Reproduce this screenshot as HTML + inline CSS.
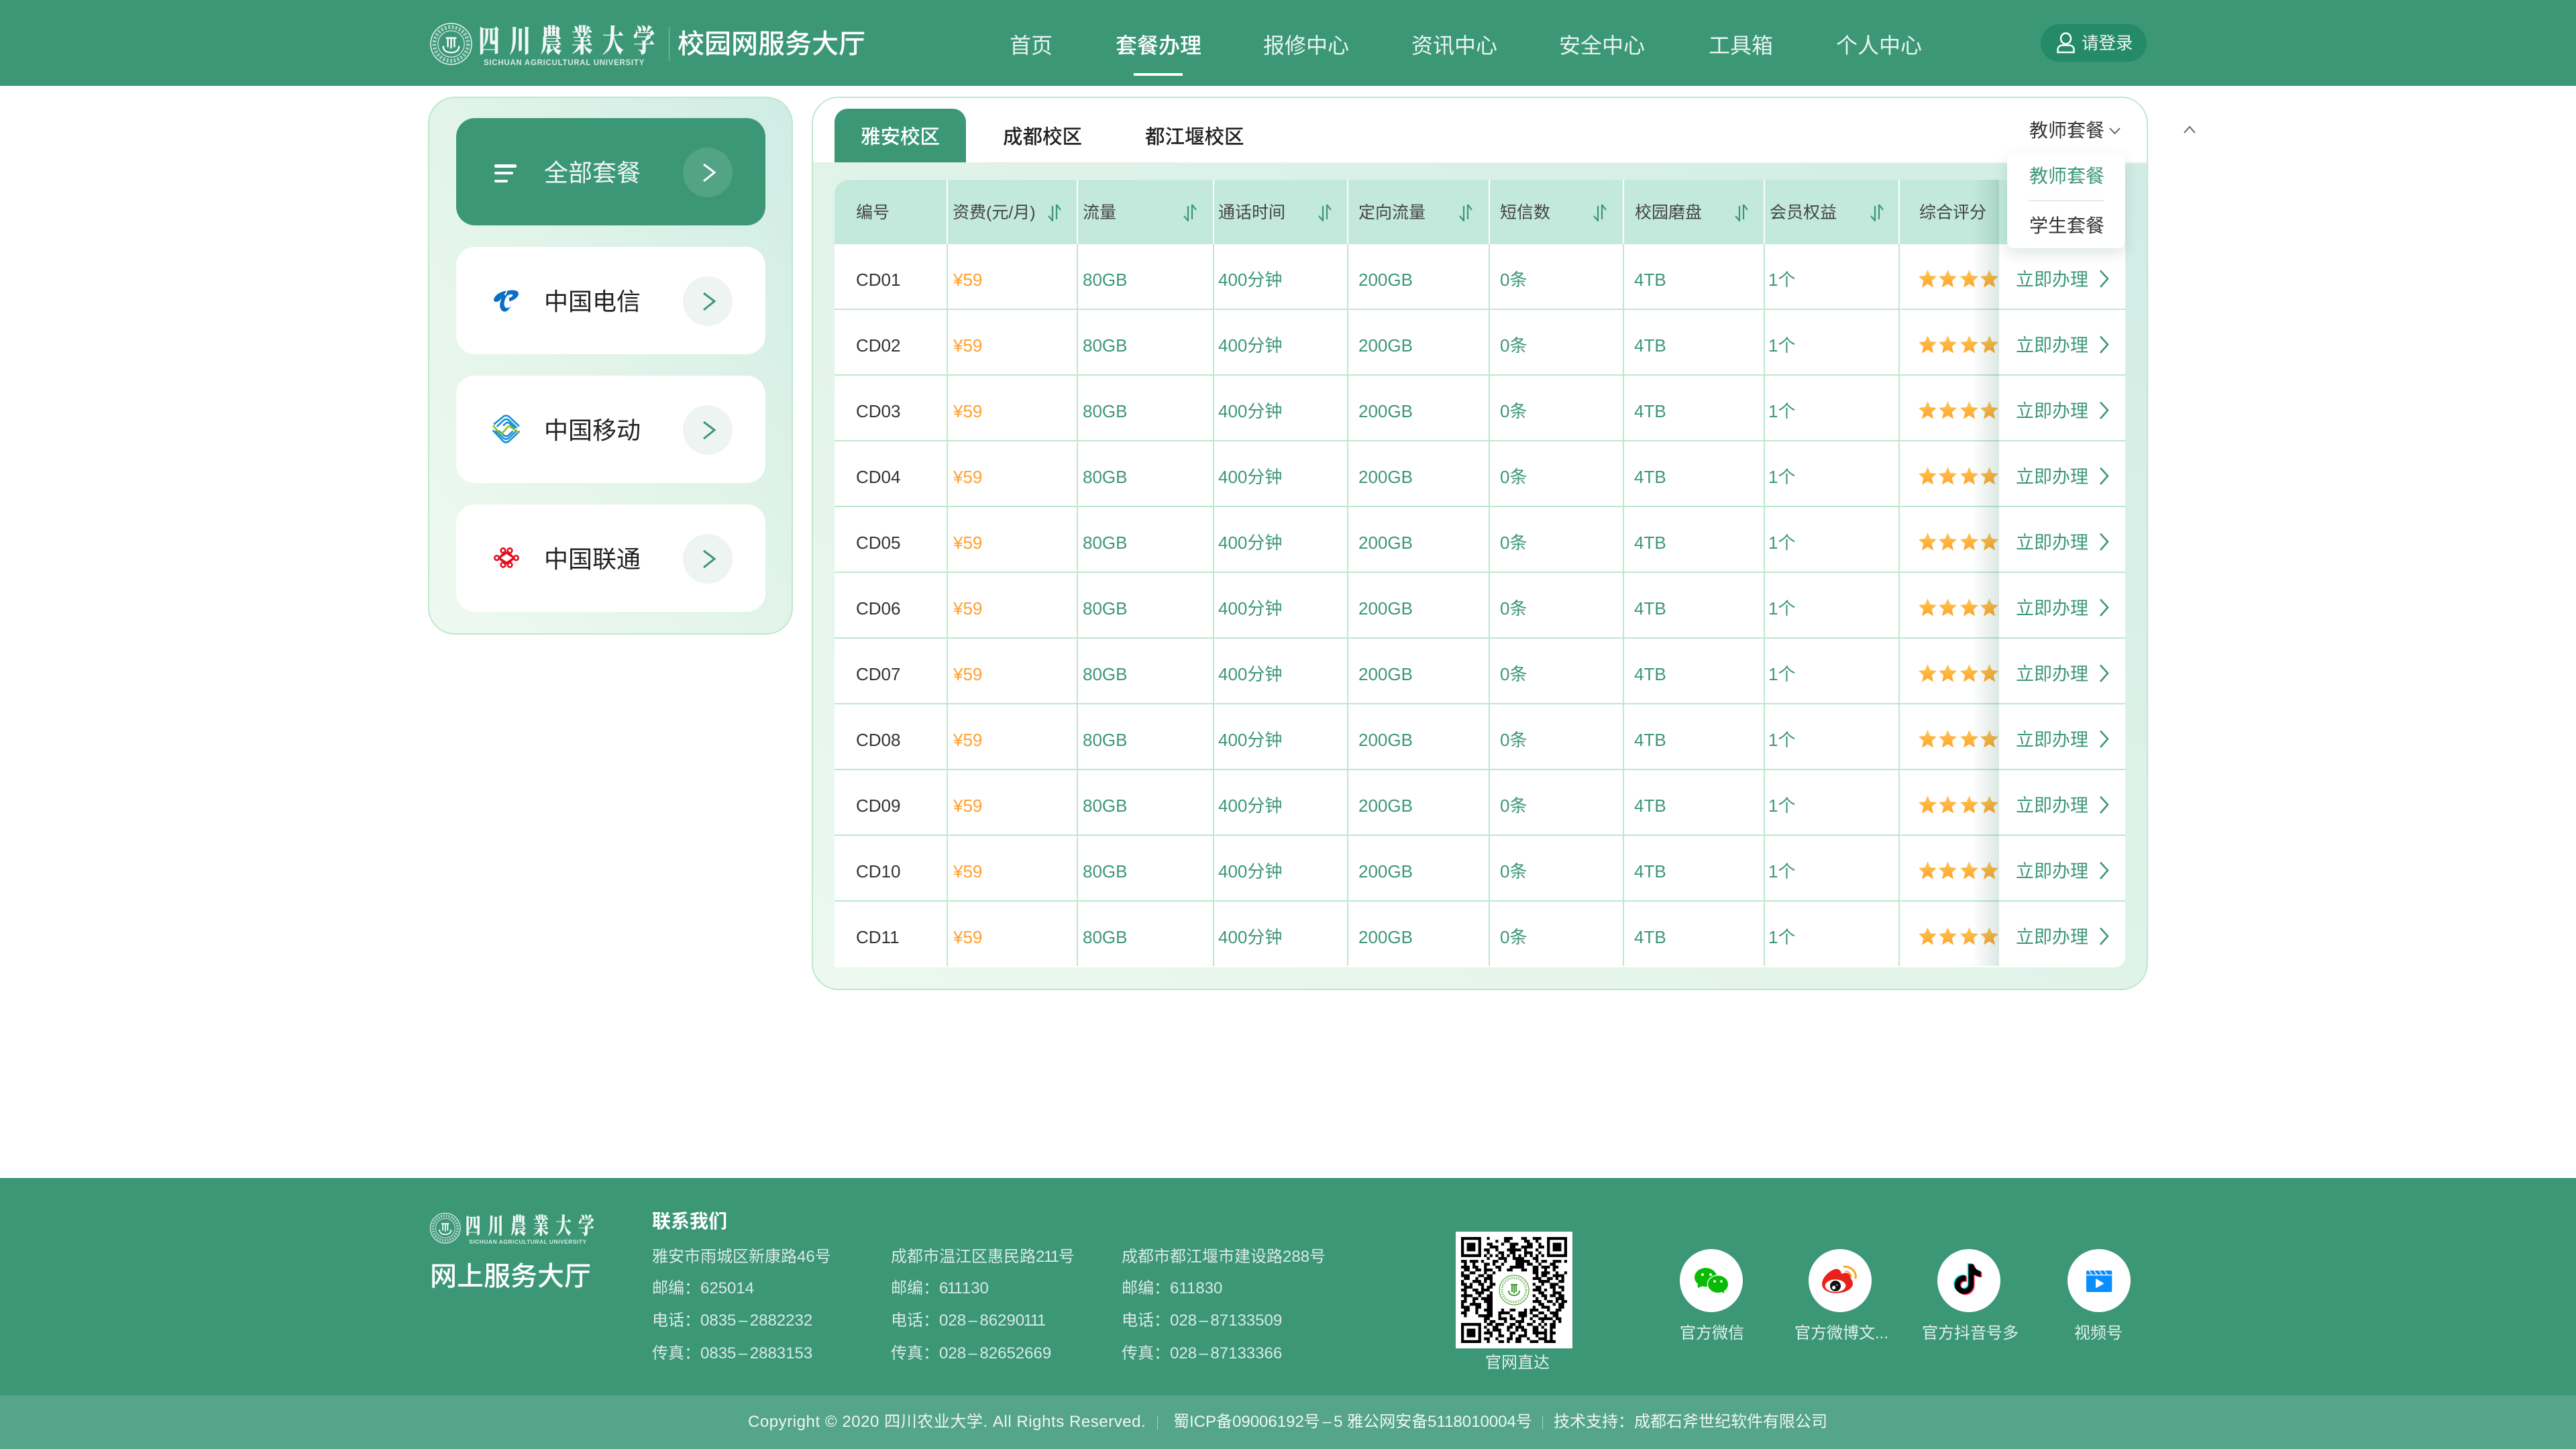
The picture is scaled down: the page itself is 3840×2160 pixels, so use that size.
<!DOCTYPE html>
<html lang="zh-CN"><head><meta charset="utf-8"><title>校园网服务大厅</title>
<style>
html,body{margin:0;padding:0;background:#fff}
body{position:relative;width:3840px;height:2160px;overflow:hidden;font-family:"Liberation Sans","Noto Sans CJK SC",sans-serif;color:#333}
.a{position:absolute}
.t{position:absolute;white-space:nowrap}
.nav{top:52px;font-size:32px;line-height:32px;color:#eaf5f1}
.card{position:absolute;left:680px;width:461px;height:160px;border-radius:28px;background:#fff}
.card b{position:absolute;left:131px;top:64px;font-size:36px;line-height:36px;font-weight:400;color:#222;white-space:nowrap}
.card i{position:absolute;left:338px;top:44px;width:74px;height:74px;border-radius:50%;background:#edf4f1}
.card svg{position:absolute;left:367px;top:67px}
.tab{top:190px;font-size:29.5px;line-height:30px;font-weight:500;color:#222}
.th{top:304px;font-size:25px;line-height:26px;color:#444}
.sort{position:absolute;top:304px}
.vl{position:absolute;top:268px;height:1172px;width:2px;background:linear-gradient(#fff 0,#fff 96px,#bde8cd 96px)}
.hl{position:absolute;left:1244px;width:1924px;height:2px;background:#bde8cd}
.r{position:absolute;left:0;width:3840px;height:98px;font-size:26px;line-height:106px;color:#3c9777}
.r span{position:absolute;top:0;white-space:nowrap}
.r .c0{left:1276px;color:#333}.r .c1{left:1421px;color:#ff9f2e}.r .c2{left:1614px}.r .c3{left:1816px}.r .c4{left:2025px}.r .c5{left:2236px}.r .c6{left:2436px}.r .c7{left:2636px}
.r svg.st{position:absolute;left:2860px;top:38px}
.r .go{left:3005px;font-size:27px}
.r svg.ch{position:absolute;left:3128px;top:38px}
.f{font-size:24px;line-height:24px;color:rgba(255,255,255,.8)}
.f em{font-style:normal;margin:0 3.500px}
.f u{text-decoration:none;letter-spacing:-1.500px}
.lab{top:1976px;font-size:24px;line-height:24px;color:rgba(255,255,255,.85)}
.circ{position:absolute;top:1862px;width:94px;height:94px;border-radius:50%;background:#fff}
.lgt{position:absolute;left:73px;top:-2px;font-family:"Noto Serif CJK SC","Liberation Serif",serif;font-weight:900;font-size:46px;line-height:54px;letter-spacing:20px;transform:scaleX(.7);transform-origin:0 0;white-space:nowrap;color:#f2f8f5}
.lge{position:absolute;left:81px;top:55px;font-size:11.5px;line-height:12px;font-weight:700;letter-spacing:.72px;white-space:nowrap;color:rgba(255,255,255,.8)}
</style></head><body>
<svg width="0" height="0" style="position:absolute"><defs>
<linearGradient id="sg" x1="0" y1="0" x2="0" y2="1"><stop offset="0" stop-color="#ffc653"/><stop offset="1" stop-color="#ffa42b"/></linearGradient>
<symbol id="stars" viewBox="0 0 120 28"><g fill="url(#sg)">
<polygon id="p1" points="13.5,0 17.3,9 27,10 19.7,16.5 22,26.5 13.5,21.3 5,26.5 7.3,16.5 0,10 9.7,9"/>
<polygon transform="translate(30)" points="13.5,0 17.3,9 27,10 19.7,16.5 22,26.5 13.5,21.3 5,26.5 7.3,16.5 0,10 9.7,9"/>
<polygon transform="translate(62)" points="13.5,0 17.3,9 27,10 19.7,16.5 22,26.5 13.5,21.3 5,26.5 7.3,16.5 0,10 9.7,9"/>
<polygon transform="translate(92)" points="13.5,0 17.3,9 27,10 19.7,16.5 22,26.5 13.5,21.3 5,26.5 7.3,16.5 0,10 9.7,9"/></g></symbol>
<symbol id="srt" viewBox="0 0 20 26"><path d="M7 3V25L1 18M13 1V23M13 1L19 9" fill="none" stroke="#3c9777" stroke-width="2.2"/></symbol>
<symbol id="em" viewBox="0 0 66 66"><g fill="none" stroke="#fff">
<circle cx="33" cy="33" r="31" stroke-width="1.6" opacity=".85"/><circle cx="33" cy="33" r="25.5" stroke-width="6" stroke-dasharray="3 2.5" opacity=".55"/><circle cx="33" cy="33" r="20" stroke-width="1.2" opacity=".85"/>
<path d="M21 36c0 7 5 10 12 10s12-3 12-10M25 24h16M28 24v14M33 24v16M38 24v14" stroke-width="2.4"/></g></symbol>
</defs></svg>

<!-- header -->
<div class="a" style="left:0;top:0;width:3840px;height:128px;background:#3c9777"></div>
<div class="a" style="left:640px;top:33px;width:336px;height:66px">
<svg class="a" style="left:0;top:0" width="65" height="65"><use href="#em"/></svg>
<div class="lgt">四川農業大学</div><div class="lge">SICHUAN AGRICULTURAL UNIVERSITY</div></div>
<div class="a" style="left:997px;top:40px;width:1px;height:51px;background:rgba(255,255,255,.4)"></div>
<div class="t" style="left:1010px;top:46px;font-size:40px;line-height:40px;font-weight:500;color:#fff">校园网服务大厅</div>
<div class="t nav" style="left:1505px">首页</div>
<div class="t nav" style="left:1663px;font-weight:500;color:#fff">套餐办理</div>
<div class="a" style="left:1690px;top:109px;width:73px;height:4px;background:#fff"></div>
<div class="t nav" style="left:1883px">报修中心</div>
<div class="t nav" style="left:2104px">资讯中心</div>
<div class="t nav" style="left:2324px">安全中心</div>
<div class="t nav" style="left:2547px">工具箱</div>
<div class="t nav" style="left:2737px">个人中心</div>
<div class="a" style="left:3042px;top:36px;width:158px;height:56px;border-radius:28px;background:#258a67"></div>
<svg class="a" style="left:3064px;top:48px" width="30" height="32" fill="none" stroke="#fff" stroke-width="2.5"><ellipse cx="15.5" cy="9.5" rx="7.5" ry="8"/><path d="M3.5 30v-4c0-4 3-6.500 7-6.500h10c4 0 7 2.500 7 6.500v4z"/></svg>
<div class="t" style="left:3103px;top:52px;font-size:25.5px;line-height:26px;color:#f0f8f5">请登录</div>

<!-- left panel -->
<div class="a" style="left:638px;top:144px;width:540px;height:798px;border:2px solid #bde8cd;border-radius:40px;background:linear-gradient(to bottom left,#cfece5 0%,#e2f4ea 50%,#eef9f1 100%)"></div>
<div class="card" style="top:176px;background:#3c9777"><b style="color:#eef7f4">全部套餐</b><i style="background:rgba(255,255,255,.12)"></i>
<svg width="24" height="30" fill="none" stroke="#fff" stroke-width="3"><path d="M2 2L18 14 2 27"/></svg></div>
<div class="a" style="left:737px;top:245px;width:33px;height:4.500px;background:#fff;border-radius:2px"></div>
<div class="a" style="left:737px;top:256px;width:28px;height:4px;background:#fff;border-radius:2px"></div>
<div class="a" style="left:737px;top:268px;width:20px;height:4px;background:#fff;border-radius:2px"></div>
<div class="card" style="top:368px"><b>中国电信</b><i></i><svg width="24" height="30" fill="none" stroke="#3c9777" stroke-width="3"><path d="M2 2L18 14 2 27"/></svg></div>
<div class="card" style="top:560px"><b>中国移动</b><i></i><svg width="24" height="30" fill="none" stroke="#3c9777" stroke-width="3"><path d="M2 2L18 14 2 27"/></svg></div>
<div class="card" style="top:752px"><b>中国联通</b><i></i><svg width="24" height="30" fill="none" stroke="#3c9777" stroke-width="3"><path d="M2 2L18 14 2 27"/></svg></div>
<svg class="a" style="left:700px;top:400px" width="200" height="480" viewBox="0 0 600 1440">
<g fill="#0a6fc4"><path d="M108 140C112 120 135 105 165 100L155 118C148 128 140 138 132 146C122 152 108 152 108 140Z"/>
<path d="M170 100C190 95 218 97 219 112C219 128 200 142 178 148L176 132C190 128 196 122 192 118C185 113 172 120 160 126L165 112Z"/>
<path d="M150 118C140 140 130 165 140 183C148 198 170 202 186 165C178 178 165 182 158 172C150 158 158 135 168 122Z"/></g>
<g fill="none" stroke="#1a8fd6" stroke-width="8"><path d="M108 698L152 662Q163 655 176 663L222 706"/><path d="M122 708L154 678Q165 670 176 680L212 714"/><path d="M150 704L163 692Q170 687 178 693L202 716"/><path d="M104 724L150 773Q163 783 176 773L224 728"/><path d="M116 726L152 760Q163 768 174 760L208 728"/><path d="M130 726L155 748Q163 754 172 748L194 728"/></g>
<path fill="none" stroke="#8cc220" stroke-width="8" d="M105 703L135 738Q140 742 147 736L170 710Q176 704 182 708L220 735"/>
<g fill="none" stroke="#e60f1e" stroke-width="8"><circle cx="122" cy="1295" r="10"/><circle cx="208" cy="1295" r="10"/><circle cx="150" cy="1262" r="10"/><circle cx="180" cy="1262" r="10"/><circle cx="150" cy="1326" r="10"/><circle cx="180" cy="1326" r="10"/><path d="M132 1295L158 1268L198 1295L172 1322ZM198 1295L172 1268L132 1295L158 1322Z"/></g>
</svg>

<!-- right panel -->
<div class="a" style="left:1210px;top:144px;width:1988px;height:1328px;border:2px solid #bde8cd;border-radius:40px;background:linear-gradient(to bottom left,#cfece5 0%,#e0f3e9 50%,#ecf8f0 100%)"></div>
<div class="a" style="left:1212px;top:146px;width:1988px;height:96px;background:#fff;border-radius:38px 38px 0 0"></div>
<div class="a" style="left:1212px;top:242px;width:1988px;height:2px;background:#e9eeec"></div>
<div class="a" style="left:1244px;top:162px;width:196px;height:80px;border-radius:20px 20px 0 0;background:#3c9777"></div>
<div class="t tab" style="left:1283px;color:#fff">雅安校区</div>
<div class="t tab" style="left:1495px">成都校区</div>
<div class="t tab" style="left:1707px">都江堰校区</div>

<!-- table -->
<div class="a" style="left:1244px;top:268px;width:1924px;height:96px;background:#c3e9dc;border-radius:22px 0 0 0"></div>
<div class="a" style="left:1244px;top:364px;width:1924px;height:1078px;background:#fff;border-radius:0 0 16px 0"></div>
<div class="hl" style="top:460px"></div><div class="hl" style="top:558px"></div><div class="hl" style="top:656px"></div><div class="hl" style="top:754px"></div><div class="hl" style="top:852px"></div><div class="hl" style="top:950px"></div><div class="hl" style="top:1048px"></div><div class="hl" style="top:1146px"></div><div class="hl" style="top:1244px"></div><div class="hl" style="top:1342px"></div>
<div class="vl" style="left:1411px"></div><div class="vl" style="left:1605px"></div><div class="vl" style="left:1808px"></div><div class="vl" style="left:2008px"></div><div class="vl" style="left:2219px"></div><div class="vl" style="left:2419px"></div><div class="vl" style="left:2629px"></div><div class="vl" style="left:2830px"></div>

<div class="t th" style="left:1276px">编号</div>
<div class="t th" style="left:1420px">资费(元/月)</div>
<div class="t th" style="left:1614px">流量</div>
<div class="t th" style="left:1816px">通话时间</div>
<div class="t th" style="left:2025px">定向流量</div>
<div class="t th" style="left:2236px">短信数</div>
<div class="t th" style="left:2437px">校园磨盘</div>
<div class="t th" style="left:2638px">会员权益</div>
<div class="t th" style="left:2861px">综合评分</div>
<svg class="sort" style="left:1562px" width="20" height="26"><use href="#srt"/></svg>
<svg class="sort" style="left:1764px" width="20" height="26"><use href="#srt"/></svg>
<svg class="sort" style="left:1965px" width="20" height="26"><use href="#srt"/></svg>
<svg class="sort" style="left:2175px" width="20" height="26"><use href="#srt"/></svg>
<svg class="sort" style="left:2375px" width="20" height="26"><use href="#srt"/></svg>
<svg class="sort" style="left:2586px" width="20" height="26"><use href="#srt"/></svg>
<svg class="sort" style="left:2788px" width="20" height="26"><use href="#srt"/></svg>

<div class="r" style="top:364px"><span class="c0">CD01</span><span class="c1">¥59</span><span class="c2">80GB</span><span class="c3">400分钟</span><span class="c4">200GB</span><span class="c5">0条</span><span class="c6">4TB</span><span class="c7">1个</span><svg class="st" width="120" height="28"><use href="#stars"/></svg><span class="go">立即办理</span><svg class="ch" width="20" height="28" fill="none" stroke="#3c9777" stroke-width="2.600"><path d="M3 1.500L14 13.500 3 26"/></svg></div>
<div class="r" style="top:462px"><span class="c0">CD02</span><span class="c1">¥59</span><span class="c2">80GB</span><span class="c3">400分钟</span><span class="c4">200GB</span><span class="c5">0条</span><span class="c6">4TB</span><span class="c7">1个</span><svg class="st" width="120" height="28"><use href="#stars"/></svg><span class="go">立即办理</span><svg class="ch" width="20" height="28" fill="none" stroke="#3c9777" stroke-width="2.600"><path d="M3 1.500L14 13.500 3 26"/></svg></div>
<div class="r" style="top:560px"><span class="c0">CD03</span><span class="c1">¥59</span><span class="c2">80GB</span><span class="c3">400分钟</span><span class="c4">200GB</span><span class="c5">0条</span><span class="c6">4TB</span><span class="c7">1个</span><svg class="st" width="120" height="28"><use href="#stars"/></svg><span class="go">立即办理</span><svg class="ch" width="20" height="28" fill="none" stroke="#3c9777" stroke-width="2.600"><path d="M3 1.500L14 13.500 3 26"/></svg></div>
<div class="r" style="top:658px"><span class="c0">CD04</span><span class="c1">¥59</span><span class="c2">80GB</span><span class="c3">400分钟</span><span class="c4">200GB</span><span class="c5">0条</span><span class="c6">4TB</span><span class="c7">1个</span><svg class="st" width="120" height="28"><use href="#stars"/></svg><span class="go">立即办理</span><svg class="ch" width="20" height="28" fill="none" stroke="#3c9777" stroke-width="2.600"><path d="M3 1.500L14 13.500 3 26"/></svg></div>
<div class="r" style="top:756px"><span class="c0">CD05</span><span class="c1">¥59</span><span class="c2">80GB</span><span class="c3">400分钟</span><span class="c4">200GB</span><span class="c5">0条</span><span class="c6">4TB</span><span class="c7">1个</span><svg class="st" width="120" height="28"><use href="#stars"/></svg><span class="go">立即办理</span><svg class="ch" width="20" height="28" fill="none" stroke="#3c9777" stroke-width="2.600"><path d="M3 1.500L14 13.500 3 26"/></svg></div>
<div class="r" style="top:854px"><span class="c0">CD06</span><span class="c1">¥59</span><span class="c2">80GB</span><span class="c3">400分钟</span><span class="c4">200GB</span><span class="c5">0条</span><span class="c6">4TB</span><span class="c7">1个</span><svg class="st" width="120" height="28"><use href="#stars"/></svg><span class="go">立即办理</span><svg class="ch" width="20" height="28" fill="none" stroke="#3c9777" stroke-width="2.600"><path d="M3 1.500L14 13.500 3 26"/></svg></div>
<div class="r" style="top:952px"><span class="c0">CD07</span><span class="c1">¥59</span><span class="c2">80GB</span><span class="c3">400分钟</span><span class="c4">200GB</span><span class="c5">0条</span><span class="c6">4TB</span><span class="c7">1个</span><svg class="st" width="120" height="28"><use href="#stars"/></svg><span class="go">立即办理</span><svg class="ch" width="20" height="28" fill="none" stroke="#3c9777" stroke-width="2.600"><path d="M3 1.500L14 13.500 3 26"/></svg></div>
<div class="r" style="top:1050px"><span class="c0">CD08</span><span class="c1">¥59</span><span class="c2">80GB</span><span class="c3">400分钟</span><span class="c4">200GB</span><span class="c5">0条</span><span class="c6">4TB</span><span class="c7">1个</span><svg class="st" width="120" height="28"><use href="#stars"/></svg><span class="go">立即办理</span><svg class="ch" width="20" height="28" fill="none" stroke="#3c9777" stroke-width="2.600"><path d="M3 1.500L14 13.500 3 26"/></svg></div>
<div class="r" style="top:1148px"><span class="c0">CD09</span><span class="c1">¥59</span><span class="c2">80GB</span><span class="c3">400分钟</span><span class="c4">200GB</span><span class="c5">0条</span><span class="c6">4TB</span><span class="c7">1个</span><svg class="st" width="120" height="28"><use href="#stars"/></svg><span class="go">立即办理</span><svg class="ch" width="20" height="28" fill="none" stroke="#3c9777" stroke-width="2.600"><path d="M3 1.500L14 13.500 3 26"/></svg></div>
<div class="r" style="top:1246px"><span class="c0">CD10</span><span class="c1">¥59</span><span class="c2">80GB</span><span class="c3">400分钟</span><span class="c4">200GB</span><span class="c5">0条</span><span class="c6">4TB</span><span class="c7">1个</span><svg class="st" width="120" height="28"><use href="#stars"/></svg><span class="go">立即办理</span><svg class="ch" width="20" height="28" fill="none" stroke="#3c9777" stroke-width="2.600"><path d="M3 1.500L14 13.500 3 26"/></svg></div>
<div class="r" style="top:1344px"><span class="c0">CD11</span><span class="c1">¥59</span><span class="c2">80GB</span><span class="c3">400分钟</span><span class="c4">200GB</span><span class="c5">0条</span><span class="c6">4TB</span><span class="c7">1个</span><svg class="st" width="120" height="28"><use href="#stars"/></svg><span class="go">立即办理</span><svg class="ch" width="20" height="28" fill="none" stroke="#3c9777" stroke-width="2.600"><path d="M3 1.500L14 13.500 3 26"/></svg></div>

<!-- fixed column shadow -->
<div class="a" style="left:2940px;top:268px;width:40px;height:1172px;background:linear-gradient(90deg,rgba(40,110,85,0),rgba(40,110,85,.16))"></div>

<!-- dropdown -->
<div class="t" style="left:3025px;top:181px;font-size:28px;line-height:28px;color:#333">教师套餐</div>
<svg class="a" style="left:3144px;top:190px" width="17" height="10" fill="none" stroke="#666" stroke-width="2"><path d="M1 1L8.500 9 16 1"/></svg>
<div class="a" style="left:2992px;top:228px;width:176px;height:142px;background:#fff;border-radius:10px;box-shadow:0 8px 20px rgba(30,80,60,.14)"></div>
<div class="t" style="left:3025px;top:249px;font-size:28px;line-height:28px;color:#3c9777">教师套餐</div>
<div class="a" style="left:3024px;top:298px;width:112px;height:2px;background:#e8eaea"></div>
<div class="t" style="left:3025px;top:323px;font-size:28px;line-height:28px;color:#333">学生套餐</div>
<svg class="a" style="left:3255px;top:188px" width="18" height="11" fill="none" stroke="#666" stroke-width="2"><path d="M1 10L9 1 17 10"/></svg>

<!-- footer -->
<div class="a" style="left:0;top:1756px;width:3840px;height:324px;background:#3c9777"></div>
<div class="a" style="left:0;top:2080px;width:3840px;height:80px;background:#55a58a"></div>
<div class="a" style="left:640px;top:1807px;width:336px;height:66px;transform:scale(.731);transform-origin:0 0">
<svg class="a" style="left:0;top:0" width="65" height="65"><use href="#em"/></svg>
<div class="lgt">四川農業大学</div><div class="lge">SICHUAN AGRICULTURAL UNIVERSITY</div></div>
<div class="t" style="left:641px;top:1883px;font-size:40px;line-height:40px;font-weight:500;color:#fff">网上服务大厅</div>
<div class="t" style="left:972px;top:1807px;font-size:28px;line-height:28px;font-weight:700;color:#fff">联系我们</div>

<div class="t f" style="left:972px;top:1862px">雅安市雨城区新康路46号</div>
<div class="t f" style="left:972px;top:1909px">邮编：625014</div>
<div class="t f" style="left:972px;top:1957px">电话：0835<em>–</em>2882232</div>
<div class="t f" style="left:972px;top:2006px">传真：0835<em>–</em>2883153</div>
<div class="t f" style="left:1328px;top:1862px">成都市温江区惠民路<u>211</u>号</div>
<div class="t f" style="left:1328px;top:1909px">邮编：<u>611</u>130</div>
<div class="t f" style="left:1328px;top:1957px">电话：028<em>–</em>8629<u>0111</u></div>
<div class="t f" style="left:1328px;top:2006px">传真：028<em>–</em>82652669</div>
<div class="t f" style="left:1672px;top:1862px">成都市都江堰市建设路288号</div>
<div class="t f" style="left:1672px;top:1909px">邮编：611830</div>
<div class="t f" style="left:1672px;top:1957px">电话：028<em>–</em>87133509</div>
<div class="t f" style="left:1672px;top:2006px">传真：028<em>–</em>87133366</div>

<!-- QR -->
<div class="a" style="left:2170px;top:1836px;width:174px;height:174px;background:#fff"></div>
<svg class="a" style="left:2178px;top:1844px" width="158" height="158" viewBox="0 0 37 37"><path fill="none" stroke="#000" stroke-width="1" d="M0 .5h7m2 0h1m5 0h3m3 0h2m2 0h3m2 0h7M0 1.500h1m5 0h1m5 0h1m2 0h2m5 0h2m2 0h1m3 0h1m5 0h1M0 2.500h1m1 0h3m1 0h1m2 0h2m3 0h1m2 0h3m3 0h2m2 0h1m2 0h1m1 0h3m1 0h1M0 3.500h1m1 0h3m1 0h1m3 0h3m4 0h2m2 0h4m2 0h2m1 0h1m1 0h3m1 0h1M0 4.500h1m1 0h3m1 0h1m1 0h2m2 0h1m3 0h5m1 0h1m3 0h1m3 0h1m1 0h3m1 0h1M0 5.500h1m5 0h1m2 0h1m3 0h2m2 0h2m3 0h3m2 0h1m2 0h1m5 0h1M0 6.500h7m1 0h1m1 0h1m1 0h1m1 0h1m1 0h1m1 0h1m1 0h1m1 0h1m1 0h1m1 0h1m1 0h1m1 0h7M9 7.500h1m3 0h3m2 0h4m3 0h2M0 8.500h2m1 0h3m1 0h1m3 0h2m2 0h1m3 0h5m2 0h1m1 0h2m2 0h3m1 0h1M1 9.500h1m2 0h1m3 0h2m1 0h1m2 0h1m4 0h3m1 0h2m2 0h1m3 0h2M0 10.500h3m1 0h2m2 0h1m3 0h2m3 0h5m3 0h2m1 0h3m1 0h2M1 11.500h2m2 0h2m1 0h3m2 0h1m2 0h2m3 0h2m2 0h2m2 0h1m2 0h1M0 12.500h1m2 0h2m3 0h1m2 0h1M25 12.500h2m1 0h3m2 0h1m2 0h1M0 13.500h3m3 0h2m1 0h2M26 13.500h1m1 0h2m2 0h4M1 14.500h2m2 0h1m2 0h3M25 14.500h3m2 0h2m1 0h1m1 0h1M0 15.500h1m3 0h3m1 0h1m1 0h1M27 15.500h4m3 0h2M0 16.500h2m1 0h1m2 0h2m2 0h2M25 16.500h1m2 0h1m2 0h3M1 17.500h3m3 0h1m1 0h2M26 17.500h2m3 0h2m1 0h2M0 18.500h2m2 0h2m1 0h3M25 18.500h3m1 0h1m2 0h1m2 0h1M1 19.500h1m3 0h3m2 0h1M27 19.500h2m3 0h3M0 20.500h4m2 0h1m2 0h2M25 20.500h1m2 0h2m1 0h2m1 0h2M1 21.500h1m2 0h2m1 0h4M26 21.500h1m2 0h1m3 0h3M0 22.500h2m2 0h1m3 0h3M25 22.500h3m2 0h2m1 0h1m1 0h2M0 23.500h1m2 0h4m2 0h2M27 23.500h2m3 0h1m1 0h2M0 24.500h3m2 0h2m2 0h2M25 24.500h1m2 0h3m3 0h2M1 25.500h2m2 0h1m2 0h3m3 0h1m2 0h2m3 0h1m1 0h3m3 0h1m2 0h2M0 26.500h2m3 0h1m3 0h2m2 0h4m3 0h3m1 0h1m2 0h2m2 0h3M1 27.500h1m4 0h5m2 0h1m3 0h1m2 0h3m2 0h2m2 0h1m2 0h2M8 28.500h2m3 0h3m1 0h2m2 0h1m2 0h1m2 0h5m1 0h2M8 29.500h1m1 0h2m3 0h1m3 0h3m3 0h1m2 0h1m3 0h1m1 0h1M0 30.500h7m2 0h2m1 0h3m2 0h2m1 0h1m2 0h2m2 0h1m1 0h1m1 0h2M0 31.500h1m5 0h1m1 0h1m2 0h2m3 0h2m1 0h3m3 0h2m1 0h1m2 0h2M0 32.500h1m1 0h3m1 0h1m2 0h1m1 0h3m2 0h1m2 0h1m1 0h2m2 0h2m2 0h1m1 0h1M0 33.500h1m1 0h3m1 0h1m1 0h3m2 0h1m3 0h2m3 0h1m2 0h5m1 0h2M0 34.500h1m1 0h3m1 0h1m3 0h1m2 0h2m2 0h1m2 0h3m3 0h1m2 0h1m1 0h1M0 35.500h1m5 0h1m1 0h2m2 0h1m3 0h2m1 0h2m2 0h1m3 0h3m1 0h1M0 36.500h7m2 0h1m3 0h2m1 0h1m2 0h2m3 0h3m2 0h4"/></svg>
<div class="a" style="left:2231px;top:1897px;width:51px;height:51px;background:#fff;border-radius:8px"></div>
<svg class="a" style="left:2234px;top:1900px" width="46" height="46" fill="none" stroke="#5aa84a"><circle cx="23" cy="23" r="22" stroke-width="1.200"/><circle cx="23" cy="23" r="18" stroke-width="3.500" stroke-dasharray="2 1.500" opacity=".6"/><path d="M15 24c0 5 4 7 8 7s8-2 8-7M18 15h10M20 15v11M23 15v13M26 15v11" stroke="#3f9a2e" stroke-width="2"/></svg>
<div class="t" style="left:2214px;top:2020px;font-size:24px;line-height:24px;color:rgba(255,255,255,.85)">官网直达</div>

<!-- social -->
<div class="circ" style="left:2504px"></div><div class="circ" style="left:2696px"></div><div class="circ" style="left:2888px"></div><div class="circ" style="left:3082px"></div>
<svg class="a" style="left:2500px;top:1855px" width="300" height="105" viewBox="0 0 900 315">
<ellipse cx="128" cy="147" rx="50" ry="42" fill="#09bb07"/><path d="M92 178L93 195L118 184Z" fill="#09bb07"/>
<ellipse cx="183" cy="178" rx="47" ry="40" fill="#09bb07" stroke="#fff" stroke-width="4"/><path d="M195 210L212 219L208 203Z" fill="#09bb07"/>
<g fill="#fff"><circle cx="114" cy="135" r="6"/><circle cx="150" cy="135" r="6"/><circle cx="168" cy="165" r="5.500"/><circle cx="198" cy="165" r="5.500"/></g>
<path fill="#e8211b" d="M648 177C648 150 680 115 712 110C725 110 735 120 735 132C750 125 770 125 775 142C772 150 786 160 786 175C786 200 750 218 710 218C675 218 648 202 648 177Z"/>
<ellipse cx="708" cy="185" rx="46" ry="28" fill="#fff"/><circle cx="708" cy="186" r="24" fill="#111"/><circle cx="701" cy="193" r="8" fill="#fff"/><circle cx="715" cy="182" r="3" fill="#fff"/>
<g fill="none" stroke="#f9a51c" stroke-linecap="round"><path d="M747 100C775 95 805 125 798 150" stroke-width="9"/><path d="M753 122C765 118 782 135 777 148" stroke-width="6"/></g>
</svg>
<svg class="a" style="left:2890px;top:1855px" width="300" height="105" viewBox="0 0 900 315">
<path id="tk" fill="#25f4ee" transform="translate(-5 -4)" d="M133 88h22c3 15 14 28 33 32v24c-12 0-23-4-32-10v46c0 24-20 42-42 42s-43-18-43-42c0-26 24-46 50-41v25c-13-4-25 4-25 16 0 10 8 18 18 18 11 0 19-8 19-19z"/>
<path fill="#fe2c55" transform="translate(5 4)" d="M133 88h22c3 15 14 28 33 32v24c-12 0-23-4-32-10v46c0 24-20 42-42 42s-43-18-43-42c0-26 24-46 50-41v25c-13-4-25 4-25 16 0 10 8 18 18 18 11 0 19-8 19-19z"/>
<path fill="#000" d="M133 88h22c3 15 14 28 33 32v24c-12 0-23-4-32-10v46c0 24-20 42-42 42s-43-18-43-42c0-26 24-46 50-41v25c-13-4-25 4-25 16 0 10 8 18 18 18 11 0 19-8 19-19z"/>
<rect x="660" y="117" width="115" height="96" rx="6" fill="#0a8efc"/><rect x="660" y="135" width="115" height="4" fill="#fff"/>
<g stroke="#fff" stroke-width="4"><path d="M672 117L684 135M695 117L707 135M718 117L730 135M741 117L753 135"/></g>
<path fill="#fff" stroke="#fff" stroke-width="4" stroke-linejoin="round" d="M704 156L736 175L704 193Z"/>
</svg>
<div class="t lab" style="left:2504px">官方微信</div>
<div class="t lab" style="left:2675px">官方微博文...</div>
<div class="t lab" style="left:2865px">官方抖音号多</div>
<div class="t lab" style="left:3092px">视频号</div>

<!-- copyright -->
<div class="t f" style="left:1115px;top:2108px;color:rgba(255,255,255,.9);letter-spacing:.55px">Copyright © 2020 四川农业大学. All Rights Reserved.</div>
<div class="a" style="left:1725px;top:2110px;width:1px;height:21px;background:rgba(255,255,255,.5)"></div>
<div class="t f" style="left:1749px;top:2108px;color:rgba(255,255,255,.9)">蜀ICP备09006192号<em>–</em>5 雅公网安备5118010004号</div>
<div class="a" style="left:2299px;top:2110px;width:1px;height:21px;background:rgba(255,255,255,.5)"></div>
<div class="t f" style="left:2316px;top:2108px;color:rgba(255,255,255,.9)">技术支持：成都石斧世纪软件有限公司</div>
</body></html>
